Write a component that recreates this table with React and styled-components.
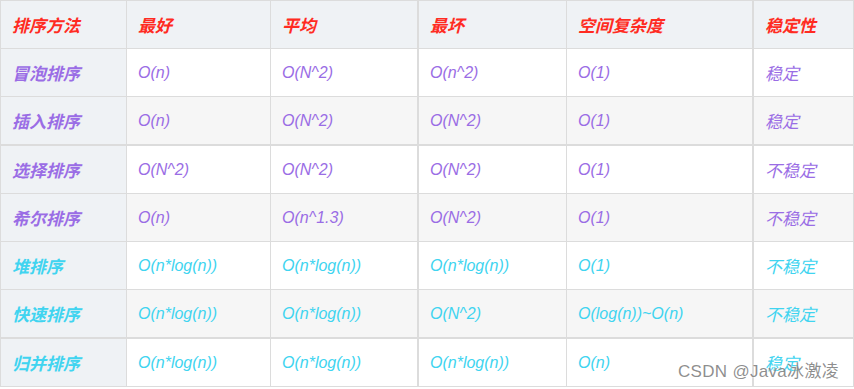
import React from 'react';
import styled, { createGlobalStyle } from 'styled-components';

const GlobalStyle = createGlobalStyle`
  html, body {
    margin: 0;
    padding: 0;
    background: #fff;
  }
  body {
    font-family: "Liberation Sans", Arial, "Noto Sans CJK SC", sans-serif;
  }
`;

const COLS = [126, 144, 148, 148, 187, 100];
const THICK_COLS = [2, 4];

const HEADERS = ['排序方法', '最好', '平均', '最坏', '空间复杂度', '稳定性'];

const ROWS = [
  { tone: 'purple', cells: ['冒泡排序', 'O(n)', 'O(N^2)', 'O(n^2)', 'O(1)', '稳定'] },
  { tone: 'purple', thick: true, cells: ['插入排序', 'O(n)', 'O(N^2)', 'O(N^2)', 'O(1)', '稳定'] },
  { tone: 'purple', cells: ['选择排序', 'O(N^2)', 'O(N^2)', 'O(N^2)', 'O(1)', '不稳定'] },
  { tone: 'purple', cells: ['希尔排序', 'O(n)', 'O(n^1.3)', 'O(N^2)', 'O(1)', '不稳定'] },
  { tone: 'cyan', cells: ['堆排序', 'O(n*log(n))', 'O(n*log(n))', 'O(n*log(n))', 'O(1)', '不稳定'] },
  { tone: 'cyan', thick: true, cells: ['快速排序', 'O(n*log(n))', 'O(n*log(n))', 'O(N^2)', 'O(log(n))~O(n)', '不稳定'] },
  { tone: 'cyan', cells: ['归并排序', 'O(n*log(n))', 'O(n*log(n))', 'O(n*log(n))', 'O(n)', '稳定'] },
];

const TONES = {
  purple: '#9a6de5',
  cyan: '#40d4f0',
  red: '#ff2b22',
};

const isCjk = (s) => /[\u4e00-\u9fff]/.test(s);

export default function App() {
  return (
    <>
      <GlobalStyle />
      <Wrap>
        <Table>
          <Row>
            {HEADERS.map((h, i) => (
              <Cell key={h} $w={COLS[i]} $thick={THICK_COLS.includes(i)} $shade="#eff2f5">
                <HeadText>{h}</HeadText>
              </Cell>
            ))}
          </Row>
          {ROWS.map((row, r) => (
            <Row key={r} $thick={row.thick}>
              {row.cells.map((c, i) => (
                <Cell
                  key={i}
                  $w={COLS[i]}
                  $thick={THICK_COLS.includes(i)}
                  $shade={i === 0 ? '#eff2f5' : r % 2 === 1 ? '#f6f6f6' : '#fff'}
                >
                  {i === 0 ? (
                    <NameText $color={TONES[row.tone]}>{c}</NameText>
                  ) : (
                    <ValueText $color={TONES[row.tone]} $cjk={isCjk(c)}>
                      {c}
                    </ValueText>
                  )}
                </Cell>
              ))}
            </Row>
          ))}
        </Table>
        <Watermark>CSDN @Java冰激凌</Watermark>
      </Wrap>
    </>
  );
}

const Wrap = styled.div`
  position: relative;
  width: 854px;
  height: 389px;
  overflow: hidden;
`;

const Table = styled.div`
  display: flex;
  flex-direction: column;
  border-top: 1px solid #dcdcdc;
  border-left: 1px solid #dcdcdc;
  width: 853px;
`;

const Row = styled.div`
  display: flex;
  height: ${(p) => (p.$thick ? 49 : 48)}px;
  border-bottom: ${(p) => (p.$thick ? 2 : 1)}px solid #dcdcdc;
  box-sizing: border-box;
`;

const Cell = styled.div`
  box-sizing: border-box;
  width: ${(p) => p.$w}px;
  flex: none;
  display: flex;
  align-items: center;
  padding: 0 11px;
  background: ${(p) => p.$shade};
  border-right: ${(p) => (p.$thick ? 2 : 1)}px solid #dcdcdc;
  white-space: nowrap;
`;

const HeadText = styled.span`
  color: ${TONES.red};
  font-size: 17px;
  font-weight: bold;
  font-style: italic;
  font-family: "Liberation Sans", "Noto Sans CJK SC", sans-serif;
`;

const NameText = styled.span`
  color: ${(p) => p.$color};
  font-size: 17px;
  font-weight: bold;
  font-style: italic;
  font-family: "Liberation Sans", "Noto Sans CJK SC", sans-serif;
`;

const ValueText = styled.span`
  color: ${(p) => p.$color};
  font-size: ${(p) => (p.$cjk ? 17 : 16)}px;
  font-style: italic;
  font-family: "Liberation Sans", "Noto Sans CJK SC", sans-serif;
`;

const Watermark = styled.div`
  position: absolute;
  right: 15px;
  bottom: 7px;
  font-size: 17px;
  color: rgba(105, 105, 105, 0.75);
  text-shadow: 0 0 2px rgba(255, 255, 255, 0.9);
  font-family: "Liberation Sans", "Noto Sans CJK SC", sans-serif;
  letter-spacing: 0.3px;
`;
